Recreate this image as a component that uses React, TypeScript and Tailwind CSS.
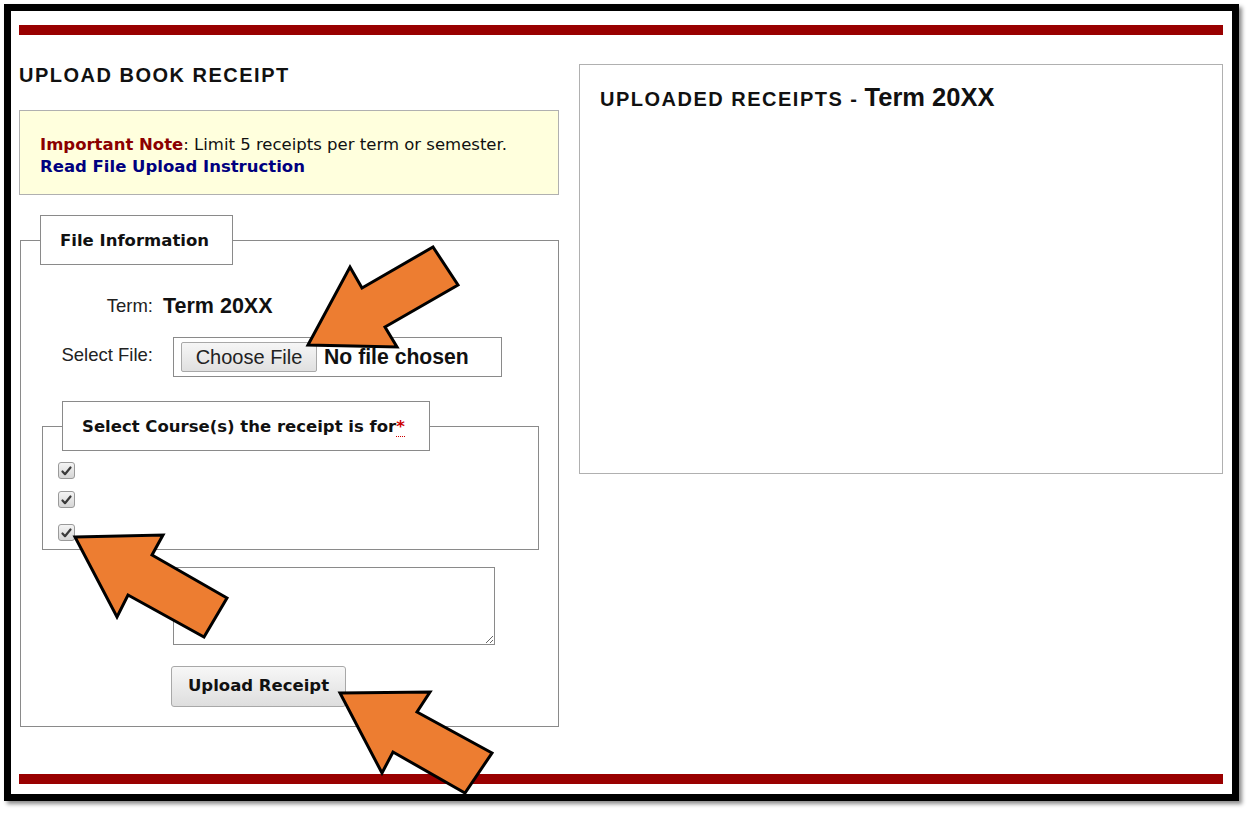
import React from "react";

const tahoma = { fontFamily: '"DejaVu Sans", Verdana, sans-serif' };

function Check() {
  return (
    <div className="w-[17px] h-[17px] rounded-[3px] border border-[#9a9a9a] bg-gradient-to-b from-[#f4f4f4] to-[#d6d6d6] flex items-center justify-center">
      <svg width="11" height="10" viewBox="0 0 11 10">
        <path d="M1.5 5.5 L4 8.2 L9.5 1.5" fill="none" stroke="#3a3a3a" strokeWidth="2.2" strokeLinecap="round" strokeLinejoin="round" />
      </svg>
    </div>
  );
}

function Arrow({ pts }: { pts: string }) {
  return <polygon points={pts} fill="#ED7D31" stroke="#000" strokeWidth="3" strokeLinejoin="miter" />;
}

export default function App() {
  return (
    <div className="relative w-[1251px] h-[814px] bg-white overflow-hidden font-['Liberation_Sans',Arial,sans-serif]">
      <div className="ml-[4px] mt-[4px] w-[1235px] h-[797px] border-[7px] border-black bg-white shadow-[3px_3px_4px_rgba(0,0,0,0.45)]">
        <div className="ml-[8px] mt-[14px] w-[1204px] h-[10px] bg-[#990000]" />
        <div className="flex gap-[20px] ml-[8px] mt-[28px] items-start">
          {/* Left column */}
          <div className="w-[540px] flex flex-col">
            <h1 className="text-[20px] leading-[24px] font-bold tracking-[1.5px] text-[#111]">UPLOAD BOOK RECEIPT</h1>
            <div className="mt-[23px] h-[85px] border border-[#b0b0b0] bg-[#ffffdd] pl-[20px] pt-[23px] text-[16.5px] leading-[22px] text-[#111]" style={tahoma}>
              <div>
                <span className="font-bold text-[#8b0000]">Important Note</span>: Limit 5 receipts per term or semester.
              </div>
              <div className="font-bold text-[#00007f]">Read File Upload Instruction</div>
            </div>
            <fieldset className="mt-[20px] ml-[1px] w-[539px] border border-[#8a8a8a] pb-[19px]">
              <legend className="ml-[19px] w-[193px] h-[50px] border border-[#8a8a8a] bg-white pl-[19px] text-left text-[16.5px] leading-[50px] font-bold text-[#111]" style={tahoma}>
                File Information
              </legend>
              <div className="mt-[29px] flex items-center h-[24px]">
                <div className="w-[132px] text-right text-[18.5px] text-[#222]">Term:</div>
                <div className="ml-[10px] text-[21.5px] font-bold text-[#111]">Term 20XX</div>
              </div>
              <div className="mt-[19px] flex items-center h-[40px]">
                <div className="w-[132px] text-right text-[18.5px] text-[#222] -mt-[4px]">Select File:</div>
                <div className="ml-[20px] w-[329px] h-[40px] border border-[#8a8a8a] flex items-center pl-[7px]">
                  <div className="w-[136px] h-[30px] border border-[#a8a8a8] rounded-[2px] bg-gradient-to-b from-[#f6f6f6] to-[#e0e0e0] flex items-center justify-center text-[20px] text-[#222]">
                    Choose File
                  </div>
                  <div className="ml-[7px] text-[21.2px] font-bold text-[#111]">No file chosen</div>
                </div>
              </div>
              <fieldset className="mt-[24px] ml-[21px] w-[497px] border border-[#8a8a8a] pb-[8px]">
                <legend className="ml-[19px] w-[368px] h-[50px] border border-[#8a8a8a] bg-white pl-[19px] text-left text-[16.5px] leading-[50px] font-bold text-[#111]" style={tahoma}>
                  Select Course(s) the receipt is for
                  <abbr className="text-[#cc0000] no-underline border-b border-dotted border-[#cc0000]" title="required">*</abbr>
                </legend>
                <div className="ml-[15px] mt-[11px] flex flex-col">
                  <Check />
                  <div className="mt-[12px]"><Check /></div>
                  <div className="mt-[16px]"><Check /></div>
                </div>
              </fieldset>
              <textarea className="block mt-[17px] ml-[152px] w-[322px] h-[78px] border border-[#8a8a8a] resize" />
              <button className="block mt-[21px] ml-[150px] w-[175px] h-[41px] border border-[#a8a8a8] rounded-[3px] bg-gradient-to-b from-[#f7f7f7] to-[#dedede] text-[16.5px] font-bold text-[#111]" style={tahoma}>
                Upload Receipt
              </button>
            </fieldset>
          </div>
          {/* Right column */}
          <div className="mt-[1px] w-[644px] h-[410px] border border-[#b0b0b0] pl-[20px] pt-[13px]">
            <div className="flex items-baseline">
              <span className="text-[20px] font-bold tracking-[1.5px] text-[#111]">UPLOADED RECEIPTS -</span>
              <span className="ml-[6px] text-[25.5px] font-bold text-[#111]">Term 20XX</span>
            </div>
          </div>
        </div>
        <div className="ml-[8px] mt-[47px] w-[1204px] h-[10px] bg-[#990000]" />
      </div>
      <svg className="absolute left-0 top-0 pointer-events-none" width="1251" height="814" viewBox="0 0 1251 814">
        <Arrow pts="308,345 350,267 362,288 433,247 458,285 385,327 397,347" />
        <Arrow pts="75,537 163,535 152,555 227,598 204,637 128,595 117,617" />
        <Arrow pts="340,693 430,692 417,712 492,753 465,793 393,752 382,773" />
      </svg>
    </div>
  );
}
